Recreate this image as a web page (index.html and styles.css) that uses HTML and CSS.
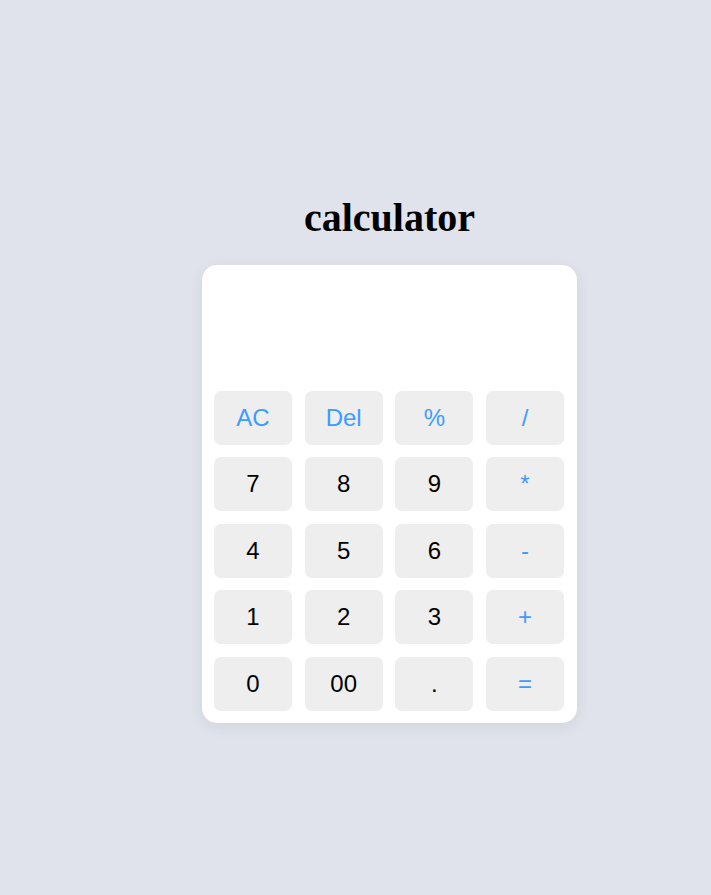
FILE: index.html
```html
<!DOCTYPE html>
<html>
<head>
<meta charset="utf-8">
<link rel="stylesheet" href="styles.css">
</head>
<body>
<div class="wrap">
  <h1 class="title">calculator</h1>
  <div class="card">
    <div class="display"></div>
    <div class="keys">
      <button class="key op">AC</button>
      <button class="key op">Del</button>
      <button class="key op">%</button>
      <button class="key op">/</button>
      <button class="key">7</button>
      <button class="key">8</button>
      <button class="key">9</button>
      <button class="key op">*</button>
      <button class="key">4</button>
      <button class="key">5</button>
      <button class="key">6</button>
      <button class="key op">-</button>
      <button class="key">1</button>
      <button class="key">2</button>
      <button class="key">3</button>
      <button class="key op">+</button>
      <button class="key">0</button>
      <button class="key">00</button>
      <button class="key">.</button>
      <button class="key op">=</button>
    </div>
  </div>
</div>
</body>
</html>
```
FILE: styles.css
```css
html, body {
  margin: 0;
  padding: 0;
  background: #e0e3eb;
  height: 100%;
}
.wrap {
  width: 375px;
  margin-left: 202px;
  padding-top: 195px;
}
.title {
  margin: 0 0 24px;
  font-family: "Liberation Serif", "Times New Roman", serif;
  font-weight: bold;
  font-size: 40px;
  line-height: 46px;
  text-align: center;
  color: #000;
}
.card {
  box-sizing: border-box;
  width: 375px;
  background: #fff;
  border-radius: 15px;
  padding: 12px 13px 12px 12px;
  display: flex;
  flex-direction: column;
  gap: 12.5px;
  box-shadow: 0 4px 14px rgba(40, 50, 80, 0.08);
}
.display {
  height: 101px;
}
.keys {
  display: grid;
  grid-template-columns: repeat(4, 1fr);
  column-gap: 12.67px;
  row-gap: 12.5px;
}
.key {
  height: 54px;
  border: none;
  border-radius: 7px;
  background: #eeeeee;
  font-family: "Liberation Sans", Arial, sans-serif;
  font-size: 24px;
  color: #000;
  padding: 0;
}
.key.op {
  color: #3d9cff;
}
```
